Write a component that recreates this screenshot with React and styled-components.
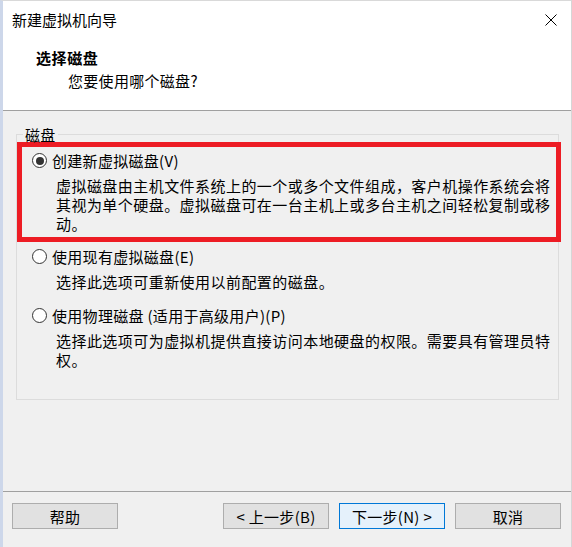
import React from 'react'
import styled, {createGlobalStyle} from 'styled-components'

const Global = createGlobalStyle`
  html, body {
    margin: 0;
    padding: 0;
    background: #f0f0f0;
  }
  body {
    font-family: "Noto Sans CJK SC", "Noto Sans", sans-serif;
    color: #000;
  }
`

const Window = styled.div`
  width: 572px;
  height: 547px;
  box-sizing: border-box;
  display: flex;
  flex-direction: column;
  border-left: 3px solid #cdd7ea;
  border-right: 1px solid #d6d6d6;
  border-top: 1px solid #d9d9d9;
  background: #f0f0f0;
`

const Header = styled.div`
  background: #fff;
  height: 110px;
  box-sizing: border-box;
  border-bottom: 1px solid #a0a0a0;
  flex: none;
`

const TitleBar = styled.div`
  height: 37px;
  display: flex;
  align-items: center;
  justify-content: space-between;
  padding: 0 14px 0 9px;
  font-size: 15px;
  line-height: 19px;
`

const CloseIcon = styled.svg`
  width: 12px;
  height: 12px;
  margin-top: 1px;
`

const Heading = styled.div`
  padding: 10px 0 0 33px;
`

const HeadTitle = styled.div`
  font-size: 15px;
  line-height: 19px;
  font-weight: 700;
  letter-spacing: 0.6px;
`

const HeadSub = styled.div`
  font-size: 15px;
  line-height: 19px;
  margin: 4px 0 0 32px;
  letter-spacing: 0.3px;
`

const Body = styled.div`
  flex: 1;
  padding: 14px 12px 0 13px;
`

const Group = styled.fieldset`
  margin: 0;
  padding: 0;
  height: 275px;
  box-sizing: border-box;
  border: 1px solid #dcdcdc;
  min-width: 0;
`

const Legend = styled.legend`
  font-size: 15px;
  line-height: 19px;
  padding: 0 2px;
  margin-left: 6px;
  letter-spacing: 0.3px;
`

const Highlight = styled.div`
  width: 544px;
  box-sizing: border-box;
  border: 5px solid #ed1c24;
  margin-top: -2px;
  padding: 4px 0 4px 0;
`

const Option = styled.div`
  padding-left: ${p => p.$inset}px;
  margin-top: ${p => p.$top || 0}px;
`

const RadioRow = styled.div`
  display: flex;
  align-items: center;
  gap: 5px;
  font-size: 15px;
  line-height: 19px;
  letter-spacing: 0.3px;
`

const Radio = styled.span`
  width: 15px;
  height: 15px;
  box-sizing: border-box;
  border-radius: 50%;
  border: 1px solid #333;
  background: #fff;
  display: flex;
  align-items: center;
  justify-content: center;
  flex: none;
  &::after {
    content: '';
    width: 8px;
    height: 8px;
    border-radius: 50%;
    background: ${p => (p.$checked ? '#333' : 'transparent')};
  }
`

const Desc = styled.div`
  margin: 6px 0 0 24px;
  font-size: 15px;
  line-height: 19px;
  letter-spacing: 0.45px;
  white-space: nowrap;
`

const Footer = styled.div`
  flex: none;
  height: 44px;
  border-top: 1px solid #a0a0a0;
  display: flex;
  align-items: flex-start;
  padding: 11px 10px 0 9px;
  gap: 10px;
`

const Button = styled.div`
  width: 106px;
  height: 26px;
  box-sizing: border-box;
  border: 1px solid ${p => (p.$primary ? '#0078d7' : '#adadad')};
  background: ${p => (p.$primary ? '#e5f1fb' : '#e1e1e1')};
  display: flex;
  align-items: center;
  justify-content: center;
  font-size: 15px;
  letter-spacing: 0.3px;
  margin-left: ${p => p.$push ? 'auto' : '0'};
`

export default function App() {
  return (
    <>
      <Global />
      <Window>
        <Header>
          <TitleBar>
            <span>新建虚拟机向导</span>
            <CloseIcon viewBox="0 0 12 12">
              <path d="M0.5 0.5 L11.5 11.5 M11.5 0.5 L0.5 11.5" stroke="#000" strokeWidth="1" fill="none" />
            </CloseIcon>
          </TitleBar>
          <Heading>
            <HeadTitle>选择磁盘</HeadTitle>
            <HeadSub>您要使用哪个磁盘?</HeadSub>
          </Heading>
        </Header>
        <Body>
          <Group>
            <Legend>磁盘</Legend>
            <Highlight>
              <Option $inset={10}>
                <RadioRow><Radio $checked />创建新虚拟磁盘(V)</RadioRow>
                <Desc>
                  虚拟磁盘由主机文件系统上的一个或多个文件组成，客户机操作系统会将<br />
                  其视为单个硬盘。虚拟磁盘可在一台主机上或多台主机之间轻松复制或移<br />
                  动。
                </Desc>
              </Option>
            </Highlight>
            <Option $inset={15} $top={5}>
              <RadioRow><Radio />使用现有虚拟磁盘(E)</RadioRow>
              <Desc>选择此选项可重新使用以前配置的磁盘。</Desc>
            </Option>
            <Option $inset={15} $top={15}>
              <RadioRow><Radio />使用物理磁盘 (适用于高级用户)(P)</RadioRow>
              <Desc>
                选择此选项可为虚拟机提供直接访问本地硬盘的权限。需要具有管理员特<br />
                权。
              </Desc>
            </Option>
          </Group>
        </Body>
        <Footer>
          <Button>帮助</Button>
          <Button $push>&lt; 上一步(B)</Button>
          <Button $primary>下一步(N) &gt;</Button>
          <Button>取消</Button>
        </Footer>
      </Window>
    </>
  )
}
